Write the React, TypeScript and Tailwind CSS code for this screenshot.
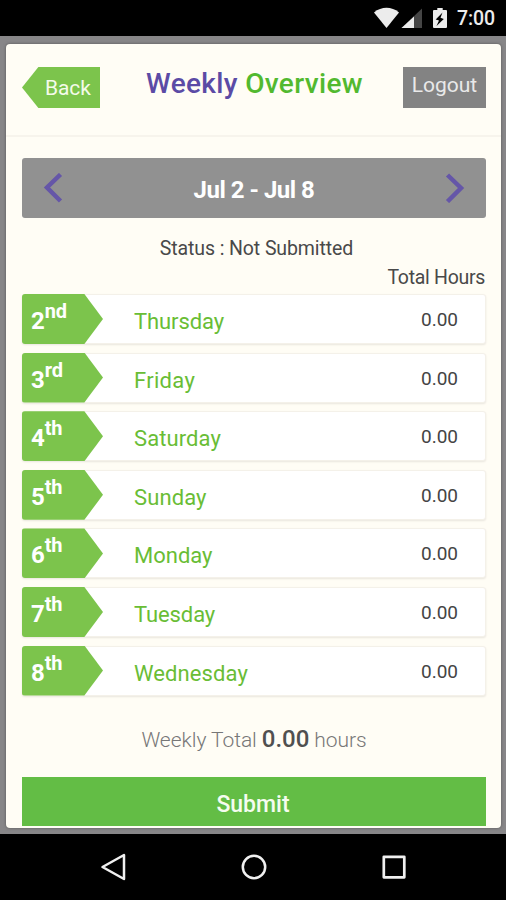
import React from 'react';

interface DayRowProps {
  num: string;
  suffix: string;
  name: string;
  hours: string;
  spacing: string;
}

const days: DayRowProps[] = [
  {num: '2', suffix: 'nd', name: 'Thursday', hours: '0.00', spacing: 'tracking-[-0.1px]'},
  {num: '3', suffix: 'rd', name: 'Friday', hours: '0.00', spacing: 'tracking-[0.3px]'},
  {num: '4', suffix: 'th', name: 'Saturday', hours: '0.00', spacing: 'tracking-[0.1px]'},
  {num: '5', suffix: 'th', name: 'Sunday', hours: '0.00', spacing: 'tracking-[0.1px]'},
  {num: '6', suffix: 'th', name: 'Monday', hours: '0.00', spacing: 'tracking-[0px]'},
  {num: '7', suffix: 'th', name: 'Tuesday', hours: '0.00', spacing: 'tracking-[-0.1px]'},
  {num: '8', suffix: 'th', name: 'Wednesday', hours: '0.00', spacing: 'tracking-[0.1px]'},
];

const StatusBar: React.FC = () => (
  <div className="flex h-9 shrink-0 items-center bg-black pl-[373px] text-[#ececec]">
    <svg width="84" height="36" viewBox="0 0 84 36" fill="currentColor">
      <path d="M1 12.500C8.500 6.300 18.500 6.300 26 12.500L13.500 28Z" />
      <path d="M49 8.500V28H28.500Z" fill="#454545" />
      <path d="M41 16.500V28H28.500Z" />
      <path
        fillRule="evenodd"
        d="M64.300 8h5.400V10h3.300a1 1 0 0 1 1 1v16a1 1 0 0 1-1 1H61a1 1 0 0 1-1-1V11a1 1 0 0 1 1-1h3.300zM69.500 12.500L62.700 19.500L66 20.500L63.500 26L70.800 19L67.500 17.700Z"
      />
    </svg>
    <span className="pt-[2px] text-[19.500px] leading-9 font-medium tracking-[-0.1px]">7:00</span>
  </div>
);

const Header: React.FC = () => (
  <div className="flex h-[93px] shrink-0 items-start justify-between border-b-2 border-[#f7f4ec] pt-[23px] pr-[15px] pl-4">
    <button className="h-[41px] w-[78px] bg-[#7cc44c] pt-px pl-[23px] text-left text-[21px] leading-[41px] tracking-[-0.1px] text-[#f4fbea] [clip-path:polygon(0_50%,21%_0,100%_0,100%_100%,21%_100%)]">
      Back
    </button>
    <h1 className="pl-[6px] text-[28px] leading-[34px] font-medium tracking-[0.350px] whitespace-nowrap text-[#52b92f]">
      <span className="text-[#5b4ba5]">Weekly</span> Overview
    </h1>
    <button className="flex h-[41px] w-[83px] items-start justify-center bg-[#838383] text-[21px] leading-[36px] text-[#e9e9e9]">
      Logout
    </button>
  </div>
);

const WeekPicker: React.FC = () => (
  <div className="flex h-[60px] items-center justify-between rounded-[3px] bg-[#919191] px-[21px]">
    <svg width="20" height="30" viewBox="0 0 20 30" fill="none" stroke="#6556a8" strokeWidth="4.500">
      <path d="M17.500 1.500L4 14.500L17.500 28" />
    </svg>
    <span className="pt-[3px] text-[24px] font-bold tracking-[-0.5px] text-white">Jul 2 - Jul 8</span>
    <svg width="20" height="30" viewBox="0 0 20 30" fill="none" stroke="#6556a8" strokeWidth="4.500">
      <path d="M2.500 2L16 15L2.500 28.500" />
    </svg>
  </div>
);

const DayRow: React.FC<DayRowProps> = props => (
  <li className="flex h-[50px] rounded-[3px] border border-[#f4f1e9] bg-white shadow-[0_1px_2px_#e9e6de]">
    <div className="-m-px h-[50px] w-[81px] shrink-0 rounded-l-[3px] bg-[#7cc44c] pt-1 pl-[9px] text-[24px] leading-[46px] font-bold text-white [clip-path:polygon(0_0,77%_0,100%_50%,77%_100%,0_100%)]">
      {props.num}
      <sup className="-top-[11px] text-[20px] leading-none font-bold tracking-[-0.2px]">{props.suffix}</sup>
    </div>
    <span className={'grow pt-[2px] pl-[32px] text-[22px] leading-[50px] text-[#69bd35] ' + props.spacing}>
      {props.name}
    </span>
    <span className="pr-[27px] text-[19px] leading-[50px] text-[#444]">{props.hours}</span>
  </li>
);

const NavBar: React.FC = () => (
  <div className="flex h-[66px] shrink-0 items-center justify-center gap-[112px] bg-black pl-[2px]">
    <svg width="28" height="28" viewBox="0 0 28 28" fill="none" stroke="#f0f0f0" strokeWidth="2.500" strokeLinejoin="round">
      <path d="M24 2V26L2.500 14Z" />
    </svg>
    <svg width="28" height="28" viewBox="0 0 28 28" fill="none" stroke="#f0f0f0" strokeWidth="2.500">
      <circle cx="14" cy="14" r="11.200" />
    </svg>
    <svg width="28" height="28" viewBox="0 0 28 28" fill="none" stroke="#f0f0f0" strokeWidth="2.700" strokeLinejoin="round">
      <rect x="3.800" y="3.800" width="20.500" height="20.500" />
    </svg>
  </div>
);

export default function App() {
  return (
    <div className="flex h-[900px] w-[506px] flex-col overflow-hidden bg-[#878688] font-['Roboto','Noto_Sans',sans-serif]">
      <StatusBar />
      <div className="mr-[5px] ml-[6px] mt-2 flex h-[784px] shrink-0 flex-col rounded-[4px] bg-[#fffdf5] shadow-[0_0_3px_#555]">
        <Header />
        <div className="pt-[21px] pr-[15px] pl-4">
          <WeekPicker />
          <p className="mt-[16px] pl-[5px] text-center text-[19.500px] leading-[30px] tracking-[-0.1px] text-[#494949]">
            Status : Not Submitted
          </p>
          <p className="pr-px text-right text-[19.500px] leading-[28px] tracking-[-0.3px] text-[#494949]">Total Hours</p>
          <ul className="mt-[2px] flex flex-col gap-[8.600px]">
            {days.map(day => (
              <DayRow key={day.name} {...day} />
            ))}
          </ul>
          <p className="mt-[28px] text-center text-[21px] leading-[30px] font-light tracking-[-0.05px] text-[#777]">
            Weekly Total <b className="text-[24px] font-medium text-[#505050]">0.00</b> hours
          </p>
          <button className="mt-[22px] block h-[49px] w-full bg-[#63bd45] pt-[9px] pr-[2px] text-[23px] font-medium text-[#f5fcef]">
            Submit
          </button>
        </div>
      </div>
      <div className="h-[6px] shrink-0" />
      <NavBar />
    </div>
  );
}
